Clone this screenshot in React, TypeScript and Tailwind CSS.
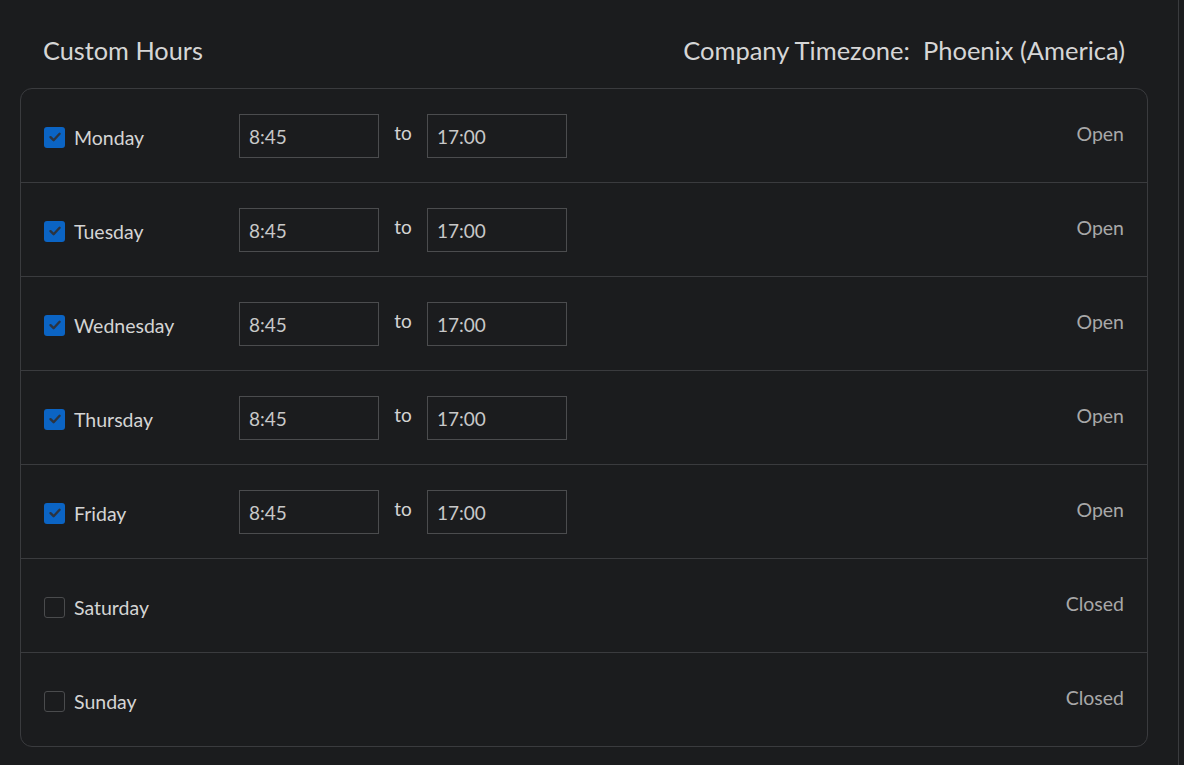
import { useState } from "react";

type Day = {
  name: string;
  open: boolean;
  from: string;
  to: string;
};

const initialDays: Day[] = [
  { name: "Monday", open: true, from: "8:45", to: "17:00" },
  { name: "Tuesday", open: true, from: "8:45", to: "17:00" },
  { name: "Wednesday", open: true, from: "8:45", to: "17:00" },
  { name: "Thursday", open: true, from: "8:45", to: "17:00" },
  { name: "Friday", open: true, from: "8:45", to: "17:00" },
  { name: "Saturday", open: false, from: "8:45", to: "17:00" },
  { name: "Sunday", open: false, from: "8:45", to: "17:00" },
];

function Checkbox({ checked, onChange }: { checked: boolean; onChange: () => void }) {
  return (
    <button
      type="button"
      onClick={onChange}
      className={
        checked
          ? "flex h-[21px] w-[21px] items-center justify-center rounded-[3px] bg-[#0b64c4]"
          : "h-[21px] w-[21px] rounded-[3px] border border-[#4a4b4d] bg-transparent"
      }
    >
      {checked && (
        <svg width="14" height="14" viewBox="0 0 14 14" fill="none">
          <path
            d="M2.5 7.2 L5.6 10.2 L11.6 3.8"
            stroke="#2c3440"
            strokeWidth="2.4"
            strokeLinecap="round"
            strokeLinejoin="round"
          />
        </svg>
      )}
    </button>
  );
}

export default function App() {
  const [days, setDays] = useState(initialDays);

  function toggle(index: number) {
    setDays((prev) => prev.map((d, i) => (i === index ? { ...d, open: !d.open } : d)));
  }

  return (
    <div
      className="flex h-[765px] w-[1184px] bg-[#1b1c1e] text-[#d4d4d4]"
      style={{ fontFamily: "Lato, 'Noto Sans', sans-serif" }}
    >
      <div className="flex-1 pl-5 pr-[30px] pt-[34px]">
        <div className="flex items-center justify-between pl-[23px] pr-[23px] pb-[21px]">
          <h1 className="text-[25.3px] leading-[33px] text-[#d6d6d6]">Custom Hours</h1>
          <p className="text-[25.5px] leading-[33px] text-[#d6d6d6]">
            Company Timezone:&nbsp; Phoenix (America)
          </p>
        </div>

        <div className="overflow-hidden rounded-xl border border-[#3a3b3e]">
          {days.map((day, i) => (
            <div
              key={day.name}
              className={
                "box-content flex h-[93px] items-center pl-[23px] pr-[23px] " +
                (i > 0 ? "border-t border-[#3a3b3e]" : "")
              }
            >
              <div className="flex w-[195px] items-center gap-[9px] pt-[3px]">
                <Checkbox checked={day.open} onChange={() => toggle(i)} />
                <span className="pt-[1px] text-[19.5px] leading-none text-[#d4d4d4]">
                  {day.name}
                </span>
              </div>
              {day.open && (
                <div className="flex items-center">
                  <input
                    defaultValue={day.from}
                    className="h-[44px] w-[140px] border border-[#4b4c4e] bg-transparent px-[9px] pt-[2px] text-[19px] text-[#c8c8c8] outline-none"
                  />
                  <span className="w-[48px] pb-[4px] text-center text-[19px] text-[#d4d4d4]">
                    to
                  </span>
                  <input
                    defaultValue={day.to}
                    className="h-[44px] w-[140px] border border-[#4b4c4e] bg-transparent px-[9px] pt-[2px] text-[19px] text-[#c8c8c8] outline-none"
                  />
                </div>
              )}
              <span className="ml-auto pb-[4px] text-[19.5px] text-[#a8a8a8]">
                {day.open ? "Open" : "Closed"}
              </span>
            </div>
          ))}
        </div>
      </div>
      <div className="w-[6px] border-l border-[#3a3b3e] bg-[#1b1c1e]" />
    </div>
  );
}
